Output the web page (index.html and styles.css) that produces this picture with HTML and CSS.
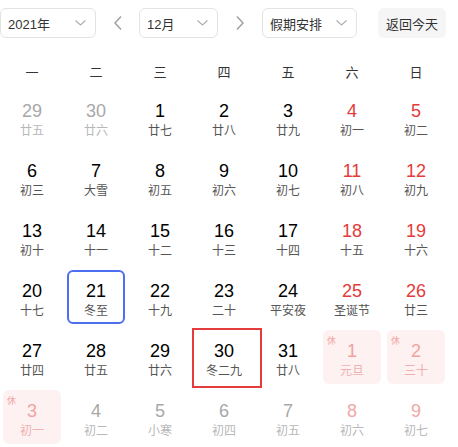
FILE: index.html
```html
<!DOCTYPE html>
<html lang="zh">
<head>
<meta charset="utf-8">
<link rel="stylesheet" href="styles.css">
</head>
<body>
<div class="cal">
  <div class="bar">
    <div class="sel sel-year"><span>2021年</span><svg class="chev" width="11" height="6" viewBox="0 0 11 6"><polyline points="0.5,0.5 5.5,5 10.5,0.5" fill="none" stroke="#b0b0b0" stroke-width="1.2"/></svg></div>
    <div class="arrow"><svg width="8" height="14" viewBox="0 0 8 14"><polyline points="7,0.5 1,7 7,13.5" fill="none" stroke="#a0a0a0" stroke-width="1.5"/></svg></div>
    <div class="sel sel-month"><span>12月</span><svg class="chev" width="11" height="6" viewBox="0 0 11 6"><polyline points="0.5,0.5 5.5,5 10.5,0.5" fill="none" stroke="#b0b0b0" stroke-width="1.2"/></svg></div>
    <div class="arrow arrow-next"><svg width="8" height="14" viewBox="0 0 8 14"><polyline points="1,0.5 7,7 1,13.5" fill="none" stroke="#a0a0a0" stroke-width="1.5"/></svg></div>
    <div class="sel sel-hol"><span>假期安排</span><svg class="chev" width="11" height="6" viewBox="0 0 11 6"><polyline points="0.5,0.5 5.5,5 10.5,0.5" fill="none" stroke="#b0b0b0" stroke-width="1.2"/></svg></div>
    <div class="today-btn">返回今天</div>
  </div>
  <div class="week">
    <div>一</div><div>二</div><div>三</div><div>四</div><div>五</div><div>六</div><div>日</div>
  </div>
  <div class="grid">
    <div class="cell other"><div class="num">29</div><div class="lun">廿五</div></div>
    <div class="cell other"><div class="num">30</div><div class="lun">廿六</div></div>
    <div class="cell"><div class="num">1</div><div class="lun">廿七</div></div>
    <div class="cell"><div class="num">2</div><div class="lun">廿八</div></div>
    <div class="cell"><div class="num">3</div><div class="lun">廿九</div></div>
    <div class="cell wkend"><div class="num">4</div><div class="lun">初一</div></div>
    <div class="cell wkend"><div class="num">5</div><div class="lun">初二</div></div>

    <div class="cell"><div class="num">6</div><div class="lun">初三</div></div>
    <div class="cell"><div class="num">7</div><div class="lun">大雪</div></div>
    <div class="cell"><div class="num">8</div><div class="lun">初五</div></div>
    <div class="cell"><div class="num">9</div><div class="lun">初六</div></div>
    <div class="cell"><div class="num">10</div><div class="lun">初七</div></div>
    <div class="cell wkend"><div class="num">11</div><div class="lun">初八</div></div>
    <div class="cell wkend"><div class="num">12</div><div class="lun">初九</div></div>

    <div class="cell"><div class="num">13</div><div class="lun">初十</div></div>
    <div class="cell"><div class="num">14</div><div class="lun">十一</div></div>
    <div class="cell"><div class="num">15</div><div class="lun">十二</div></div>
    <div class="cell"><div class="num">16</div><div class="lun">十三</div></div>
    <div class="cell"><div class="num">17</div><div class="lun">十四</div></div>
    <div class="cell wkend"><div class="num">18</div><div class="lun">十五</div></div>
    <div class="cell wkend"><div class="num">19</div><div class="lun">十六</div></div>

    <div class="cell"><div class="num">20</div><div class="lun">十七</div></div>
    <div class="cell today"><div class="num">21</div><div class="lun">冬至</div></div>
    <div class="cell"><div class="num">22</div><div class="lun">十九</div></div>
    <div class="cell"><div class="num">23</div><div class="lun">二十</div></div>
    <div class="cell"><div class="num">24</div><div class="lun">平安夜</div></div>
    <div class="cell wkend"><div class="num">25</div><div class="lun">圣诞节</div></div>
    <div class="cell wkend"><div class="num">26</div><div class="lun">廿三</div></div>

    <div class="cell"><div class="num">27</div><div class="lun">廿四</div></div>
    <div class="cell"><div class="num">28</div><div class="lun">廿五</div></div>
    <div class="cell"><div class="num">29</div><div class="lun">廿六</div></div>
    <div class="cell selected"><div class="num">30</div><div class="lun">冬二九</div><div class="sel-frame"></div></div>
    <div class="cell"><div class="num">31</div><div class="lun">廿八</div></div>
    <div class="cell other hol"><span class="rest">休</span><div class="num">1</div><div class="lun">元旦</div></div>
    <div class="cell other hol"><span class="rest">休</span><div class="num">2</div><div class="lun">三十</div></div>

    <div class="cell other hol"><span class="rest">休</span><div class="num">3</div><div class="lun">初一</div></div>
    <div class="cell other"><div class="num">4</div><div class="lun">初二</div></div>
    <div class="cell other"><div class="num">5</div><div class="lun">小寒</div></div>
    <div class="cell other"><div class="num">6</div><div class="lun">初四</div></div>
    <div class="cell other"><div class="num">7</div><div class="lun">初五</div></div>
    <div class="cell other wkend"><div class="num">8</div><div class="lun">初六</div></div>
    <div class="cell other wkend"><div class="num">9</div><div class="lun">初七</div></div>
  </div>
</div>
</body>
</html>
```

FILE: styles.css
```css
html, body {
  margin: 0;
  padding: 0;
  background: #fff;
}
body {
  font-family: "Liberation Sans", Arial, "Noto Sans CJK SC", sans-serif;
  color: #222;
}
.cal {
  width: 448px;
  padding-top: 8px;
}
.bar {
  display: flex;
  align-items: center;
  height: 30px;
}
.sel {
  box-sizing: border-box;
  height: 30px;
  border: 1px solid #e3e3e3;
  border-radius: 6px;
  display: flex;
  align-items: center;
  justify-content: space-between;
  padding: 0 9px 0 7px;
  font-size: 13px;
  color: #333;
  font-family: "Liberation Sans", Arial, "Noto Sans CJK SC", sans-serif;
}
.sel-year { width: 96px; }
.sel-month { width: 79px; }
.sel-hol { width: 95px; }
.chev { display: block; }
.arrow {
  width: 43px;
  display: flex;
  justify-content: center;
  align-items: center;
}
.arrow-next { width: 44px; }
.today-btn {
  box-sizing: border-box;
  margin-left: 21px;
  width: 68px;
  height: 30px;
  border-radius: 6px;
  background: #f5f5f6;
  display: flex;
  align-items: center;
  justify-content: center;
  font-size: 13px;
  color: #333;
  font-family: "Noto Sans CJK SC", sans-serif;
}
.week {
  margin-top: 14px;
  display: grid;
  grid-template-columns: repeat(7, 64px);
  height: 38px;
  align-items: center;
  font-family: "Noto Sans CJK SC", sans-serif;
  font-size: 13px;
  color: #333;
  text-align: center;
}
.grid {
  display: grid;
  grid-template-columns: repeat(7, 58px);
  grid-auto-rows: 54px;
  column-gap: 6px;
  row-gap: 6px;
  padding: 0 3px;
}
.cell {
  position: relative;
  box-sizing: border-box;
  border-radius: 6px;
  text-align: center;
  padding-top: 11px;
}
.num {
  font-family: "Liberation Sans", Arial, sans-serif;
  font-size: 18px;
  line-height: 20px;
  color: #000;
}
.lun {
  margin-top: 2px;
  font-family: "Noto Sans CJK SC", sans-serif;
  font-size: 12px;
  line-height: 14px;
  color: #555;
}
.wkend .num { color: #e33b3b; }
.other .num { color: #a8a8a8; }
.other .lun { color: #b8b8b8; }
.other.wkend .num { color: #f2a7a7; }
.hol { background: #fdf1f1; }
.hol .num { color: #f0a3a3; }
.hol .lun { color: #eeb0b0; }
.rest {
  position: absolute;
  left: 4px;
  top: 6px;
  font-family: "Noto Sans CJK SC", sans-serif;
  font-size: 9px;
  line-height: 10px;
  color: #f3a5a5;
}
.today {
  border: 2px solid #4e6ef2;
  padding-top: 9px;
}
.sel-frame {
  position: absolute;
  left: -3px;
  top: -2px;
  width: 70px;
  height: 60px;
  box-sizing: border-box;
  border: 2.5px solid #e63b3b;
}
```
